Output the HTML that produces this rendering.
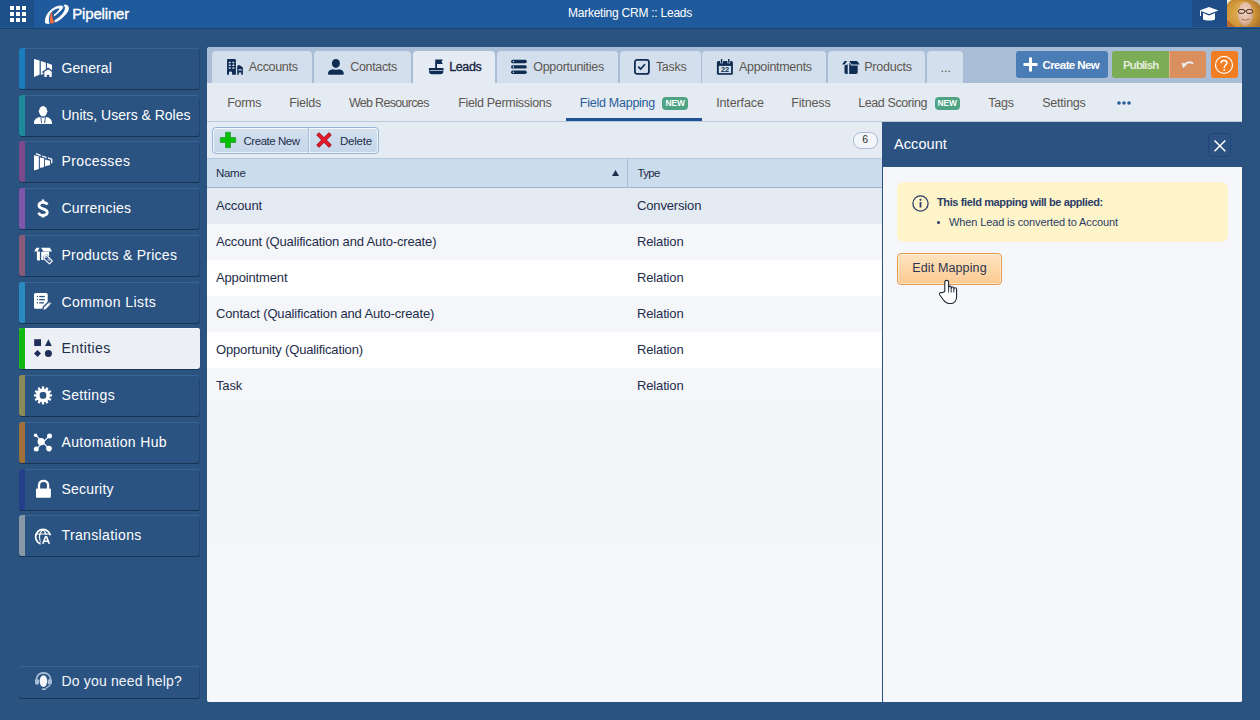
<!DOCTYPE html>
<html><head><meta charset="utf-8">
<style>
*{box-sizing:border-box;margin:0;padding:0}
html,body{width:1260px;height:720px;overflow:hidden}
body{background:#2a5380;font-family:"Liberation Sans",sans-serif;position:relative;color:#1e2d4a}
.abs{position:absolute}
svg{position:absolute;overflow:visible}
#top{left:0;top:0;width:1260px;height:29px;background:#1f5b9c;border-bottom:1px solid #1a416f}
#apps{left:0;top:0;width:34px;height:27px;background:#1d4f89}
#apps i{position:absolute;width:4px;height:4px;background:#fff}
#brand{left:72.3px;top:3.5px;color:#fff;font-size:15px;line-height:20px;letter-spacing:-0.18px;-webkit-text-stroke:0.35px #fff}
#title{left:0;width:1260px;top:5px;text-align:center;color:#fff;font-size:12px;letter-spacing:-0.245px;line-height:16px}
#grad{left:1192px;top:0;width:35px;height:27px;background:#1e4d87}
#avatar{left:1227px;top:0;width:33px;height:27px;overflow:hidden;background:#d9c8b0}
.si{position:absolute;left:19px;width:181px;height:41px;background:#2b5381;border-radius:3px;box-shadow:inset 0 1px 0 #3b6395,inset -1px 0 0 #22446f,0 1px 0.5px #173356;overflow:hidden}
.si .bar{position:absolute;left:0;top:0;bottom:0;width:6px}
.si .ic{position:absolute;left:15px;top:11px;width:18px;height:18px}
.si .tx{position:absolute;left:42.5px;top:12px;color:#fff;font-size:14px;line-height:17px;white-space:nowrap}
.si.act{background:#ecf0f5;box-shadow:inset 0 1px 0 #f5f7fa,0 1px 0.5px #173356}
.si.act .tx{color:#1e2d4a}
#main{left:207px;top:47px;width:1035px;height:655px;background:linear-gradient(#f3f5f8 60%,#f6f7fb);border-radius:3px 3px 2px 2px;overflow:hidden}
#tabbar{left:0;top:0;width:1035px;height:36px;background:#a9bed6}
.tab{position:absolute;top:4px;height:32px;background:#d3dfec;border-radius:4px 4px 0 0;color:#5c5751;font-size:12.5px;line-height:16px;white-space:nowrap}
.tab.act{background:#e4ebf3;color:#14213d;height:33px;-webkit-text-stroke:0.3px #14213d}
.tab span{position:absolute;top:7.8px}
#subnav{left:0;top:36px;width:1035px;height:39px;background:#e4ebf3;border-bottom:1px solid #b9cadc}
.sn{position:absolute;top:11.5px;color:#5c5751;font-size:12.5px;line-height:16px;white-space:nowrap}
.sn.act{color:#2a5c9a}
.new{position:absolute;top:13.5px;width:25.5px;height:13px;border-radius:4px;background:#4da383;color:#fff;font-size:9.8px;font-weight:bold;line-height:13px;text-align:center}
.new span{display:inline-block;transform:scaleX(0.86);letter-spacing:-0.2px;position:relative;top:-0.6px}
#uline{left:359px;top:70.5px;width:136px;height:3px;background:#1f5294}
.btn{position:absolute;top:4px;height:27px;border-radius:3px;color:#fff;font-size:12px;font-weight:bold;line-height:27px;white-space:nowrap}
#toolbar{left:0;top:75px;width:675px;height:36px;background:#e4ebf3}
#tbgrp{left:5px;top:5px;width:167px;height:27px;border:1px solid #95b6da;border-radius:4px;background:linear-gradient(#d3e0ee,#c6d7ea);box-shadow:inset 0 0 0 1px rgba(255,255,255,0.75);overflow:hidden}
#tbgrp .div{position:absolute;left:95px;top:0;width:1px;height:27px;background:#a3bfdc;box-shadow:1px 0 0 rgba(255,255,255,0.6)}
.tbt{position:absolute;top:7px;font-size:11.5px;color:#1e2d4a;line-height:13px;white-space:nowrap}
#count{left:646px;top:85px;width:24.5px;height:16.5px;border:1px solid #aabbd8;border-radius:8px;background:#f2f5f9;font-size:10.5px;text-align:center;line-height:12.5px;color:#333}
#ghead{left:0;top:111px;width:675px;height:30px;background:#cbdcec;border-top:1px solid #b3c8de;border-bottom:1px solid #9fb8d2}
#ghead .cdiv{position:absolute;left:420px;top:0;width:1px;height:29px;background:#a8bfd6}
.gh{position:absolute;top:8px;font-size:11.5px;color:#1e2d4a;line-height:13px}
.row{position:absolute;left:0;width:675px;height:36px}
.row span{position:absolute;top:10px;font-size:13px;line-height:15px;color:#1e2d4a;white-space:nowrap}
#rp{left:675px;top:75px;width:360px;height:580px;background:#f6f7fb;border-left:1px solid #2b5282}
#rphead{left:0;top:0;width:360px;height:44.5px;background:#2c5282}
#rptitle{left:11px;top:13px;color:#fff;font-size:14.5px;line-height:18px;letter-spacing:0.08px}
#close{left:325.3px;top:11px;width:23px;height:24px;border:1px solid #21457a;border-radius:4px}
#info{left:14px;top:60px;width:331px;height:60px;background:#fdf4c9;border-radius:7px}
#editbtn{left:14px;top:131px;width:105px;height:32px;border:1px solid #e39a4c;border-radius:4px;background:linear-gradient(#fde3bf,#fccb92);box-shadow:inset 0 0 0 1px rgba(255,255,255,0.45);color:#2b3550;font-size:12.5px;line-height:28.5px;text-align:center;letter-spacing:0.13px}
</style></head>
<body>
<div id="main" class="abs">
<div id="tabbar" class="abs"></div>
<div class="tab" style="left:5px;width:100px"><svg style="left:14px;top:7px" width="20" height="18" viewBox="0 0 20 18"><path d="M1.05 2.2 Q1.05 1 2.2 1 L8.8 1 Q9.9 1 9.9 2.2 L9.9 16.75 L6.1 16.75 L6.1 14.6 Q6.1 13.6 4.5 13.6 Q3 13.6 3 14.6 L3 16.75 L1.05 16.75 Z" fill="#0f2c52"/><g fill="#d3dfec"><rect x="2.7" y="3.8" width="2.1" height="1.5" rx="0.5"/><rect x="6.3" y="3.8" width="2.1" height="1.5" rx="0.5"/><rect x="2.7" y="6.5" width="2.1" height="1.5" rx="0.5"/><rect x="6.3" y="6.5" width="2.1" height="1.5" rx="0.5"/><rect x="2.7" y="9.2" width="2.1" height="1.5" rx="0.5"/><rect x="6.3" y="9.2" width="2.1" height="1.5" rx="0.5"/></g><path d="M11.2 8.8 Q11.2 7 13 7 Q15 7.5 16.9 9.5 L16.9 16.75 L15.2 16.75 L15.2 14.5 L12.8 14.5 L12.8 16.75 L11.2 16.75 Z" fill="#0f2c52"/><rect x="12.3" y="11.3" width="3.6" height="1.1" fill="#d3dfec"/></svg><span style="left:36.70px;letter-spacing:-0.314px">Accounts</span></div>
<div class="tab" style="left:107px;width:97px"><svg style="left:13px;top:7px" width="20" height="18" viewBox="0 0 20 18"><ellipse cx="8.9" cy="5.4" rx="4" ry="4.5" fill="#0f2c52"/><path d="M1 16 C1 12.5 3.5 11.5 6 11.2 Q8.9 12.3 11.8 11.2 C14.5 11.5 16.8 12.5 16.8 16 Q16.8 16.75 15.5 16.75 L2.3 16.75 Q1 16.75 1 16 Z" fill="#0f2c52"/></svg><span style="left:36.20px;letter-spacing:-0.321px">Contacts</span></div>
<div class="tab act" style="left:206px;width:82px"><svg style="left:15px;top:7px" width="20" height="18" viewBox="0 0 20 18"><path d="M7.2 1.4 L14.8 1.4 L13.6 3.7 L14.8 6 L9 6 L9 10.5 L7.2 10.5 Z" fill="#0f2c52"/><path d="M0.9 9.9 L15.6 9.9 L15.2 14.5 Q15 16.3 12.5 16.3 L3.9 16.3 Q1.4 16.3 1.2 14.5 Z" fill="#0f2c52"/><rect x="1.8" y="12.3" width="13" height="0.7" fill="#e4ebf3"/></svg><span style="left:36.20px;letter-spacing:-0.387px">Leads</span></div>
<div class="tab" style="left:290px;width:121px"><svg style="left:13px;top:7px" width="20" height="18" viewBox="0 0 20 18"><rect x="1" y="1.8" width="15.8" height="3.4" rx="1.7" fill="#0f2c52"/><rect x="1" y="7.2" width="15.8" height="3.4" rx="1.7" fill="#0f2c52"/><rect x="1" y="12.6" width="15.8" height="3.4" rx="1.7" fill="#0f2c52"/><g fill="#d3dfec"><circle cx="3.5" cy="3.5" r="0.75"/><rect x="2.9" y="8.1" width="1.1" height="1.6"/><circle cx="3.5" cy="14.3" r="0.75"/></g></svg><span style="left:36.20px;letter-spacing:-0.275px">Opportunities</span></div>
<div class="tab" style="left:413px;width:81px"><svg style="left:13px;top:7px" width="20" height="18" viewBox="0 0 20 18"><rect x="1.9" y="1.9" width="14" height="13.95" rx="2.2" fill="none" stroke="#0f2c52" stroke-width="1.8"/><path d="M5.2 8.7 L7.6 11 L12 6.2" stroke="#0f2c52" stroke-width="1.7" fill="none"/></svg><span style="left:35.90px;letter-spacing:-0.3px">Tasks</span></div>
<div class="tab" style="left:495px;width:124px"><svg style="left:14px;top:7px" width="20" height="18" viewBox="0 0 20 18"><rect x="0.9" y="2.9" width="16" height="13.85" rx="1.6" fill="#0f2c52"/><rect x="2.8" y="7.9" width="12.3" height="7.2" fill="#d3dfec"/><rect x="4.2" y="0.5" width="2.8" height="4.8" fill="#d3dfec"/><rect x="11.4" y="0.5" width="2.8" height="4.8" fill="#d3dfec"/><rect x="4.9" y="1" width="1.4" height="3.8" fill="#0f2c52"/><rect x="12.1" y="1" width="1.4" height="3.8" fill="#0f2c52"/><text x="8.9" y="14.4" text-anchor="middle" font-family="Liberation Sans" font-weight="bold" font-size="7.4" letter-spacing="-0.3" fill="#0f2c52">22</text></svg><span style="left:37.00px;letter-spacing:-0.305px">Appointments</span></div>
<div class="tab" style="left:621px;width:97px"><svg style="left:13px;top:7px" width="20" height="18" viewBox="0 0 20 18"><path d="M1.1 6.6 L3.6 2.9 L6.1 2.9 L3.7 6.6 Z" fill="#0f2c52"/><path d="M8.1 2.9 L16 2.9 L18.8 6.6 L10.6 6.6 Z" fill="#0f2c52"/><path d="M3.5 7.4 L6.7 6.2 L6.7 15.9 L5 15.9 Q3.5 15.9 3.5 14.3 Z" fill="#0f2c52"/><path d="M8.2 4.6 L10.1 7.4 L16.7 7.4 L16.7 14.3 Q16.7 15.9 15 15.9 L8.2 15.9 Z" fill="#0f2c52"/></svg><span style="left:36.20px;letter-spacing:-0.207px">Products</span></div>
<div class="tab" style="left:720px;width:36px"><span style="left:13.5px;top:8.5px">...</span></div>
<div class="btn" style="left:809px;width:92px;background:#4a7db5"><svg style="left:7px;top:6px" width="15" height="15" viewBox="0 0 15 15"><path d="M7.5 0.5 V14.5 M0.5 7.5 H14.5" stroke="#fff" stroke-width="3"/></svg><span style="position:absolute;left:26.5px;top:0.5px;font-size:11.5px;letter-spacing:-0.61px">Create New</span></div>
<div class="btn" style="left:905px;width:57px;background:#7aad55;border-radius:3px 0 0 3px;color:#e2ebd8;font-size:11.5px;padding-left:11px;letter-spacing:-0.89px"><span style="position:relative;top:0.5px">Publish</span></div>
<div class="btn" style="left:962px;width:37px;background:#d98f5e;border-radius:0 3px 3px 0;border-left:1px solid #e6b08a"><svg style="left:10px;top:7.5px" width="15" height="11" viewBox="0 0 15 11"><path d="M4.2 5.8 Q8.5 1.2 13.2 4.6" stroke="#e8eef4" stroke-width="1.9" fill="none"/><path d="M1.6 3.4 L3 9.2 L7 5.6 Z" fill="#e8eef4"/></svg></div>
<div class="btn" style="left:1004px;width:27px;background:#f07d22"><svg style="left:3px;top:3px" width="21" height="21" viewBox="0 0 21 21"><circle cx="10" cy="10.9" r="8.5" stroke="#fff" stroke-width="1.2" fill="none"/><path d="M7 9.3 C7 7.3 8.3 6.6 10 6.6 C11.8 6.6 12.9 7.6 12.9 9.1 C12.9 10.8 10.3 11.3 10.3 13.2 V14" stroke="#fff" stroke-width="1.5" fill="none"/><circle cx="10.3" cy="15.9" r="0.95" fill="#fff"/></svg></div>
<div id="subnav" class="abs">
<div class="sn" style="left:20.20px;letter-spacing:-0.287px">Forms</div>
<div class="sn" style="left:82.20px;letter-spacing:-0.25px">Fields</div>
<div class="sn" style="left:141.90px;letter-spacing:-0.683px">Web Resources</div>
<div class="sn" style="left:251.20px;letter-spacing:-0.322px">Field Permissions</div>
<div class="sn act" style="left:372.80px;letter-spacing:-0.254px">Field Mapping</div>
<div class="sn" style="left:509.20px;letter-spacing:-0.119px">Interface</div>
<div class="sn" style="left:584.20px;letter-spacing:-0.133px">Fitness</div>
<div class="sn" style="left:651.20px;letter-spacing:-0.4px">Lead Scoring</div>
<div class="sn" style="left:781.20px;letter-spacing:-0.217px">Tags</div>
<div class="sn" style="left:835.20px;letter-spacing:-0.214px">Settings</div>
<div class="new" style="left:455px"><span>NEW</span></div>
<div class="new" style="left:727.5px"><span>NEW</span></div>
<svg style="left:910px;top:18px" width="14" height="4" viewBox="0 0 14 4"><circle cx="2" cy="2" r="1.8" fill="#2a5c9a"/><circle cx="7" cy="2" r="1.8" fill="#2a5c9a"/><circle cx="12" cy="2" r="1.8" fill="#2a5c9a"/></svg>
</div>
<div id="uline" class="abs"></div>
<div id="toolbar" class="abs"><div id="tbgrp" class="abs"><div class="div"></div>
<svg style="left:7px;top:4px" width="16" height="16" viewBox="0 0 16 16"><path d="M5.5 0.3 H10.5 V5.5 H15.7 V10.5 H10.5 V15.7 H5.5 V10.5 H0.3 V5.5 H5.5 Z" fill="#00c000" stroke="#1f8f2a" stroke-width="0.6"/></svg><span class="tbt" style="left:30.5px;letter-spacing:-0.461px">Create New</span>
<svg style="left:103px;top:4px" width="16" height="16" viewBox="0 0 16 16"><path d="M3 3 L13 13 M13 3 L3 13" stroke="#9a1020" stroke-width="3.9" stroke-linecap="square"/><path d="M3 3 L13 13 M13 3 L3 13" stroke="#ea1a2c" stroke-width="2.6" stroke-linecap="square"/></svg><span class="tbt" style="left:127px;letter-spacing:-0.22px">Delete</span>
</div></div>
<div id="count" class="abs">6</div>
<div id="ghead" class="abs"><div class="cdiv"></div><span class="gh" style="left:9px;letter-spacing:-0.3px">Name</span><svg style="left:405px;top:11px" width="7" height="6" viewBox="0 0 7 6"><path d="M3.5 0 L7 6 L0 6 Z" fill="#1e2d4a"/></svg><span class="gh" style="left:430.5px;letter-spacing:-0.7px">Type</span></div>
<div class="row" style="top:141px;background:#e3eaf2"><span style="left:9px;letter-spacing:-0.15px">Account</span><span style="left:430px;letter-spacing:-0.15px">Conversion</span></div>
<div class="row" style="top:177px;background:#f4f6f9"><span style="left:9px;letter-spacing:-0.15px">Account (Qualification and Auto-create)</span><span style="left:430px;letter-spacing:-0.15px">Relation</span></div>
<div class="row" style="top:213px;background:#ffffff"><span style="left:9px;letter-spacing:-0.15px">Appointment</span><span style="left:430px;letter-spacing:-0.15px">Relation</span></div>
<div class="row" style="top:249px;background:#f4f6f9"><span style="left:9px;letter-spacing:-0.15px">Contact (Qualification and Auto-create)</span><span style="left:430px;letter-spacing:-0.15px">Relation</span></div>
<div class="row" style="top:285px;background:#ffffff"><span style="left:9px;letter-spacing:-0.15px">Opportunity (Qualification)</span><span style="left:430px;letter-spacing:-0.15px">Relation</span></div>
<div class="row" style="top:321px;background:#f4f6f9"><span style="left:9px;letter-spacing:-0.15px">Task</span><span style="left:430px;letter-spacing:-0.15px">Relation</span></div>
<div id="rp" class="abs"><div id="rphead" class="abs"><div id="rptitle" class="abs">Account</div><div id="close" class="abs"><svg style="left:4.6px;top:5.7px" width="12" height="12" viewBox="0 0 12 12"><path d="M0.5 0.5 L11.3 11.3 M11.3 0.5 L0.5 11.3" stroke="#fff" stroke-width="1.5"/></svg></div></div>
<div id="info" class="abs"><svg style="left:15px;top:12.5px" width="17" height="17" viewBox="0 0 17 17"><circle cx="8.5" cy="8.5" r="7.6" stroke="#2b3d66" stroke-width="1.3" fill="none"/><circle cx="8.5" cy="4.8" r="1.1" fill="#2b3d66"/><rect x="7.6" y="7" width="1.8" height="5.5" fill="#2b3d66"/></svg>
<div class="abs" style="left:40px;top:14px;font-size:11px;font-weight:bold;color:#2b3d66;letter-spacing:-0.379px;line-height:13px;white-space:nowrap">This field mapping will be applied:</div>
<div class="abs" style="left:40px;top:39px;width:3px;height:3px;border-radius:50%;background:#2b3d66"></div>
<div class="abs" style="left:52px;top:34px;font-size:11px;color:#2b3d66;letter-spacing:-0.123px;line-height:13px;white-space:nowrap">When Lead is converted to Account</div></div>
<div id="editbtn" class="abs">Edit Mapping</div>
<svg style="left:56px;top:158px" width="19" height="25" viewBox="0 0 19 25"><path d="M5.8 11.5 L5.8 2 C5.8 -0.2 9.6 -0.2 9.6 2 L9.6 7.5 C9.6 5.6 12.2 5.6 12.2 7.5 L12.2 8.2 C12.2 6.5 14.8 6.5 14.8 8.3 L14.8 9 C14.8 7.4 17.6 7.4 17.6 9.2 L17.6 16.5 C17.6 20.5 15.5 23.5 12 23.5 L10 23.5 C7.5 23.5 6 22 4.5 20 L0.8 15 C-0.2 13.5 1.5 11.8 3 12.8 Z" fill="#fff" stroke="#1b2333" stroke-width="1.1" stroke-linejoin="round"/><path d="M9.6 7.5 V12.5 M12.2 8.2 V12.5 M14.8 9 V12.5" stroke="#1b2333" stroke-width="0.9"/></svg>
</div>
</div>
<div id="top" class="abs"></div>
<div id="apps" class="abs"><i style="left:10px;top:6px"></i><i style="left:16px;top:6px"></i><i style="left:22px;top:6px"></i><i style="left:10px;top:12px"></i><i style="left:16px;top:12px"></i><i style="left:22px;top:12px"></i><i style="left:10px;top:18px"></i><i style="left:16px;top:18px"></i><i style="left:22px;top:18px"></i></div>
<svg style="left:42px;top:2px" width="30" height="24" viewBox="0 0 30 24"><path d="M3.5 21 C2.5 15 7 8 14 5 C17 3.8 20 3.6 20.8 4.6 C21.3 5.5 19 9 12.5 13.8 L12 13 C16 10 18.5 7 17.5 6.2 C16.5 5.5 13 6.5 10 9 C6.5 12 6 17 7 21.5 Z" fill="#fff" stroke="#fff" stroke-width="0.9" stroke-linejoin="round"/><path d="M22 3.2 C25.5 2.5 27.5 5 26 8.5 C24 13 18 18 13.5 20 L12.8 18.5 C17 16 21.5 12 22.8 8.5 C23.8 6 23.5 4.5 22 3.2 Z" fill="#fff" stroke="#fff" stroke-width="0.9" stroke-linejoin="round"/><path d="M10.2 9.5 C8 12 7.5 17 8.5 21.8 L12.5 20.8 C10.5 17.5 10 13 10.2 9.5 Z" fill="#f26a3d"/></svg>
<div id="brand" class="abs">Pipeliner</div>
<div id="title" class="abs">Marketing CRM :: Leads</div>
<div id="grad" class="abs"><svg style="left:7px;top:6px" width="20" height="16" viewBox="0 0 20 16"><path d="M10 1 L19.5 4.5 L10 8 L0.5 4.5 Z" fill="#fff"/><path d="M4 7 L10 9.5 L16 7 L16 13 C16 15 4 15 4 13 Z" fill="#fff"/><path d="M1.5 5 L1.5 10" stroke="#fff" stroke-width="1"/></svg></div>
<div id="avatar" class="abs"><svg style="left:0;top:0" width="33" height="28" viewBox="0 0 33 28"><defs><radialGradient id="hg" cx="0.4" cy="0.5" r="0.7"><stop offset="0" stop-color="#e0b050"/><stop offset="0.6" stop-color="#cf9538"/><stop offset="1" stop-color="#a8702a"/></radialGradient><radialGradient id="fg" cx="0.45" cy="0.4" r="0.6"><stop offset="0" stop-color="#f0d6c4"/><stop offset="0.7" stop-color="#e2b9a0"/><stop offset="1" stop-color="#c99a78"/></radialGradient></defs><rect width="33" height="28" fill="#cdbfae"/><rect x="0" y="0" width="6" height="4" fill="#f2efe8"/><path d="M0 5 C2 -1 10 -2 16 0 C22 -1 30 0 33 6 L33 28 L0 28 Z" fill="url(#hg)"/><ellipse cx="18.5" cy="14" rx="7.8" ry="12" fill="url(#fg)"/><path d="M8 6 C10 2 14 1 18 1.5 C14 3 12 5 11 9 Z" fill="#d9a548"/><g fill="none" stroke="#4a3328" stroke-width="1"><rect x="11.5" y="9.5" width="6" height="3.8" rx="1.5"/><rect x="19.5" y="9.5" width="6" height="3.8" rx="1.5"/><path d="M17.5 11 L19.5 11"/></g><path d="M14.5 19 Q18.5 21.5 22.5 19" stroke="#a86a5a" stroke-width="1" fill="none"/><path d="M0 28 L0 20 C3 22 5 25 10 28 Z" fill="#b8682a"/></svg></div>
<div class="si" style="top:48px"><div class="bar" style="background:#1a7bbd"></div><svg class="ic" viewBox="0 0 18 18"><path d="M0 0 L5.6 1.6 L5.6 15.8 L0 17.9 Z M6.8 2 L11.9 3.7 L11.9 14.5 L6.8 15.8 Z M13 4 L18 5.7 L18 15 L13 15 Z" fill="#fff"/><path d="M9.2 12.9 L14.2 9.3 L18.9 12.9 L18 12.9 L18 18 L15.1 18 L15.1 16 L13 16 L13 18 L9.9 18 L9.9 12.9 Z" fill="#fff" stroke="#2c5383" stroke-width="1.3" stroke-linejoin="miter"/><path d="M10.6 13.2 L14.2 10.6 L17.6 13.2 L17.6 17.9 L15.4 17.9 L15.4 15.7 L12.7 15.7 L12.7 17.9 L10.6 17.9 Z" fill="#fff"/></svg><div class="tx" style="letter-spacing:0.075px">General</div></div>
<div class="si" style="top:95px"><div class="bar" style="background:#1e8b9b"></div><svg class="ic" viewBox="0 0 18 18"><ellipse cx="9.1" cy="5.3" rx="4" ry="5.2" fill="#fff"/><ellipse cx="9.1" cy="5.6" rx="4.6" ry="1.3" fill="#fff"/><path d="M0 17.4 C0 13.2 3 11.6 6.3 11.1 L9.1 12 L11.9 11.1 C15 11.6 18 13.2 18 17.4 Q18 18 17 18 L1 18 Q0 18 0 17.4 Z" fill="#fff"/><path d="M6.7 11.3 L7.7 17.2 M11.5 11.3 L10.5 17.2" stroke="#2c5383" stroke-width="0.9"/></svg><div class="tx" style="letter-spacing:-0.008px">Units, Users &amp; Roles</div></div>
<div class="si" style="top:141.3px"><div class="bar" style="background:#7a4a8a"></div><svg class="ic" viewBox="0 0 18 18"><path d="M0 3.3 L4.8 4.2 L4.8 17 L0 18.4 Z M5.9 5.4 L10.1 6.3 L10.1 15 L5.9 16.1 Z M11 7.6 L16 8.7 L16 13 L11 14.3 Z" fill="#fff"/><path d="M2 1.6 L6.8 3.6 M8.1 4 L12.6 5.6 M14 5.8 L17.7 7.2 L17.7 11.2" stroke="#fff" stroke-width="1.3" fill="none"/></svg><div class="tx" style="letter-spacing:0.381px">Processes</div></div>
<div class="si" style="top:188px"><div class="bar" style="background:#7e55a8"></div><svg class="ic" viewBox="0 0 18 18"><path d="M13.3 5.6 C12.5 3.9 11 3.3 9 3.3 C6.5 3.3 4.9 4.6 4.9 6.6 C4.9 8.6 6.7 9.3 9 9.9 C11.6 10.6 13.3 11.4 13.3 13.6 C13.3 15.6 11.5 16.4 9 16.4 C6.8 16.4 5.3 15.6 4.6 13.6" stroke="#fff" stroke-width="2.7" fill="none"/><path d="M9 0.6 V4 M9 15.5 V18.6" stroke="#fff" stroke-width="2.5"/></svg><div class="tx" style="letter-spacing:0.194px">Currencies</div></div>
<div class="si" style="top:234.8px"><div class="bar" style="background:#8a5a7a"></div><svg class="ic" viewBox="0 0 18 18"><path d="M0.2 5.5 L2.3 1.8 L5.7 1.8 L3.5 5.5 Z M7 1.8 L15.9 1.8 L18 5.5 L9.7 5.5 Z" fill="#fff"/><path d="M2.9 5.5 L5.9 5.5 L5.9 14.5 L4 14.5 Q2.9 14.5 2.9 13.4 Z M7.2 5.8 L15.1 5.8 L15.1 14.1 L7.2 14.1 Z" fill="#fff"/><path d="M10.3 10.4 L12.7 9.3 L18.3 14.9 L15.5 17.9 L10 12.9 Z" fill="#2c5383" stroke="#2c5383" stroke-width="1.6" stroke-linejoin="round"/><path d="M10.3 10.4 L12.7 9.3 L18.3 14.9 L15.5 17.9 L10 12.9 Z" fill="none" stroke="#fff" stroke-width="1.2" stroke-linejoin="round"/><circle cx="12" cy="11.2" r="0.8" fill="#fff"/><path d="M13.5 13 L15.8 15.3 M14.8 12.3 L16.5 14" stroke="#fff" stroke-width="0.8"/></svg><div class="tx" style="letter-spacing:0.259px">Products &amp; Prices</div></div>
<div class="si" style="top:281.5px"><div class="bar" style="background:#2a8ac0"></div><svg class="ic" viewBox="0 0 18 18"><rect x="0" y="0" width="13.7" height="15.8" rx="1.6" fill="#fff"/><g fill="#2c5383"><circle cx="3.4" cy="3.5" r="0.7"/><circle cx="3.4" cy="6.6" r="0.7"/><circle cx="3.4" cy="9.8" r="0.7"/><rect x="5.2" y="2.9" width="5.6" height="1.3"/><rect x="5.2" y="6" width="5.6" height="1.3"/><rect x="5.2" y="9.2" width="4.6" height="1.3"/></g><path d="M8.5 17.8 L9.4 14 L15.5 7.9 L18.2 10.6 L12.1 16.7 Z" fill="#fff" stroke="#2c5383" stroke-width="1.4" stroke-linejoin="round"/><path d="M14.3 9.1 L17 11.8" stroke="#2c5383" stroke-width="0.9"/></svg><div class="tx" style="letter-spacing:0.432px">Common Lists</div></div>
<div class="si act" style="top:328px"><div class="bar" style="background:#12b812"></div><svg class="ic" viewBox="0 0 18 18"><g fill="#1f2d5a"><rect x="0.2" y="0.2" width="6.8" height="6.8"/><path d="M14.4 0.2 L17.8 7 L11 7 Z"/><path d="M3.5 11.1 L7 14.6 L3.5 18.1 L0 14.6 Z"/><circle cx="14.4" cy="14.6" r="3.5"/></g></svg><div class="tx" style="letter-spacing:0.393px">Entities</div></div>
<div class="si" style="top:375px"><div class="bar" style="background:#8a8a5a"></div><svg class="ic" viewBox="0 0 18 18"><g transform="translate(9 9.4)" fill="#fff"><rect x="-1.15" y="-9" width="2.3" height="4" transform="rotate(0)"/><rect x="-1.15" y="-9" width="2.3" height="4" transform="rotate(30)"/><rect x="-1.15" y="-9" width="2.3" height="4" transform="rotate(60)"/><rect x="-1.15" y="-9" width="2.3" height="4" transform="rotate(90)"/><rect x="-1.15" y="-9" width="2.3" height="4" transform="rotate(120)"/><rect x="-1.15" y="-9" width="2.3" height="4" transform="rotate(150)"/><rect x="-1.15" y="-9" width="2.3" height="4" transform="rotate(180)"/><rect x="-1.15" y="-9" width="2.3" height="4" transform="rotate(210)"/><rect x="-1.15" y="-9" width="2.3" height="4" transform="rotate(240)"/><rect x="-1.15" y="-9" width="2.3" height="4" transform="rotate(270)"/><rect x="-1.15" y="-9" width="2.3" height="4" transform="rotate(300)"/><rect x="-1.15" y="-9" width="2.3" height="4" transform="rotate(330)"/><circle r="7"/></g><rect x="5.7" y="6.1" width="6.6" height="6.6" rx="2.6" fill="#2c5383"/></svg><div class="tx" style="letter-spacing:0.364px">Settings</div></div>
<div class="si" style="top:422px"><div class="bar" style="background:#a0703a"></div><svg class="ic" viewBox="0 0 18 18"><path d="M1.6 2.2 L15 15.6 M15.5 2.9 L2.3 16.1" stroke="#fff" stroke-width="1.2"/><g fill="#fff"><circle cx="7.2" cy="8.7" r="3.6"/><circle cx="1.6" cy="2.2" r="1.8"/><circle cx="15.5" cy="2.9" r="2.5"/><circle cx="2.3" cy="16.1" r="2.5"/><circle cx="15" cy="15.6" r="2.8"/></g></svg><div class="tx" style="letter-spacing:0.365px">Automation Hub</div></div>
<div class="si" style="top:469px"><div class="bar" style="background:#253f8a"></div><svg class="ic" viewBox="0 0 18 18"><path d="M5 9 L5 5.2 C5 -0.6 14.1 -0.6 14.1 5.2 L14.1 9" stroke="#fff" stroke-width="2.3" fill="none"/><rect x="2" y="8.4" width="14.9" height="9.3" rx="1" fill="#fff"/></svg><div class="tx" style="letter-spacing:0.2px">Security</div></div>
<div class="si" style="top:515.2px"><div class="bar" style="background:#8898a8"></div><svg class="ic" viewBox="0 0 18 18"><g transform="translate(0 0.8)"><circle cx="9" cy="10" r="7.4" stroke="#fff" stroke-width="1.7" fill="none"/><path d="M2 7.2 H15 M9 2.6 C6.5 5 5.5 8 5.5 10 C5.5 12.5 6.5 15 7.5 17 M9 2.6 C11 4.5 11.8 6.5 12 8.5" stroke="#fff" stroke-width="1.2" fill="none"/><path d="M6.6 8.4 L18.5 8.4 L18.5 19 L6.6 19 Z" fill="#2c5383"/><path d="M7.9 17 L11 9.2 L13.1 9.2 L16.2 17 L14.3 17 L13.7 15.3 L10.4 15.3 L9.8 17 Z M10.9 13.8 L13.2 13.8 L12.05 10.8 Z" fill="#fff" fill-rule="evenodd"/></g></svg><div class="tx" style="letter-spacing:0.368px">Translations</div></div>
<div class="si" style="top:666px;height:31.5px"><svg class="ic" style="top:5.8px" viewBox="0 0 18 18"><path d="M2.2 9 C2.2 3.5 5.5 0.9 9.5 0.9 C13.5 0.9 16.8 3.5 16.8 9" stroke="#a9c0da" stroke-width="1.7" fill="none"/><rect x="1" y="7" width="4" height="5.8" rx="1.8" fill="#a9c0da"/><rect x="13.9" y="7" width="4" height="5.8" rx="1.8" fill="#a9c0da"/><ellipse cx="9.45" cy="9.1" rx="3.85" ry="5.9" fill="#f4f6fb"/><path d="M11.9 16.2 L16.2 13.2" stroke="#a9c0da" stroke-width="1.2"/><rect x="7.9" y="16.2" width="4" height="1.8" rx="0.6" fill="#a9c0da"/></svg><div class="tx" style="top:7px;letter-spacing:0.165px;color:#f2f5fa">Do you need help?</div></div>
</body></html>
